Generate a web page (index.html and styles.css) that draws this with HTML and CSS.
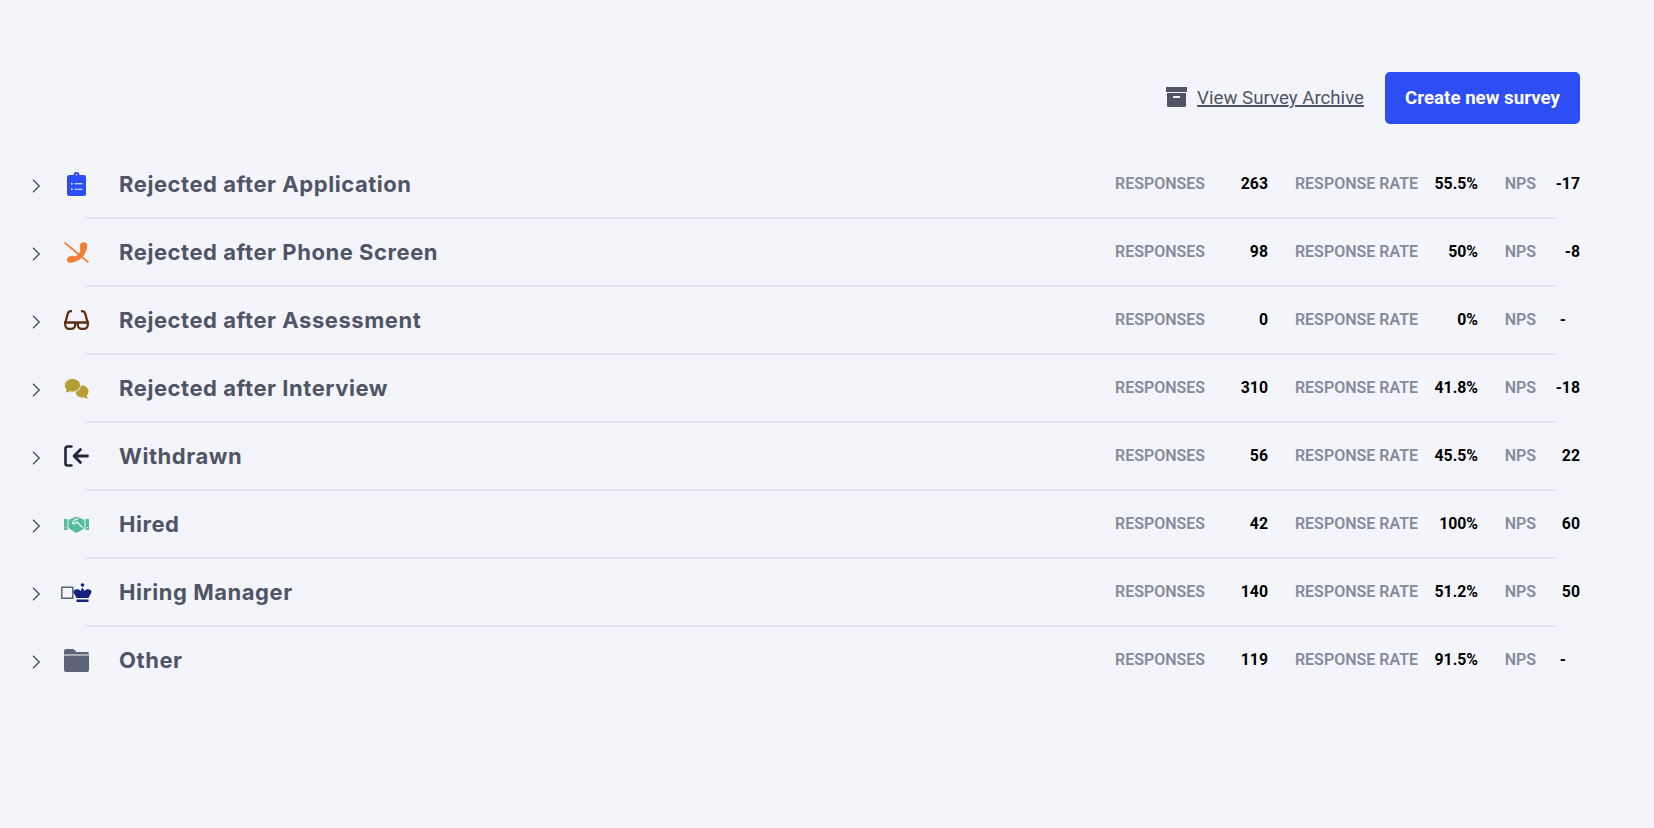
FILE: index.html
```html
<!DOCTYPE html>
<html lang="en">
<head>
    <meta charset="UTF-8">
    <title>Surveys</title>
    <link rel="stylesheet" href="styles.css">
</head>
<body>
    <header class="top-bar">
        <a class="archive-link" href="#">
            <svg class="archive-icon" viewBox="0 0 21 20"><path fill="#4f5566" d="M0 0h21v5H0z"/><path fill="#4f5566" fill-rule="evenodd" d="M1 6h19v12.500a1.500 1.500 0 0 1-1.500 1.500H2.500A1.500 1.500 0 0 1 1 18.500zM7 9v2h7V9z"/></svg>
            <span>View Survey Archive</span>
        </a>
        <button class="create-btn">Create new survey</button>
    </header>

    <main class="survey-list">
        <div class="survey-row">
            <svg class="chevron" viewBox="0 0 8 14"><path d="M1 .7l6.300 6.300L1 13.300"/></svg>
            <div class="icon-cell">
                <svg width="19" height="24" viewBox="0 0 19 24"><path fill="#2d4ef5" fill-rule="evenodd" d="M2 3h4.500a3 3 0 0 1 6 0H17a2 2 0 0 1 2 2v17a2 2 0 0 1-2 2H2a2 2 0 0 1-2-2V5a2 2 0 0 1 2-2zM9.500 2a.8.8 0 1 0 0 1.600.8.8 0 0 0 0-1.600zM4 11v1.600h1.600V11zM7.500 11.300v1h8v-1zM4 16.500v1.600h1.600v-1.600zM7.500 16.800v1h8v-1z"/></svg>
            </div>
            <h2 class="survey-name">Rejected after Application</h2>
            <div class="stats">
                <span class="stat-label">Responses</span><span class="stat-value">263</span>
                <span class="stat-label">Response rate</span><span class="stat-value">55.5%</span>
                <span class="stat-label">NPS</span><span class="stat-value">-17</span>
            </div>
        </div>
        <hr class="row-line">

        <div class="survey-row">
            <svg class="chevron" viewBox="0 0 8 14"><path d="M1 .7l6.300 6.300L1 13.300"/></svg>
            <div class="icon-cell">
                <svg width="25" height="21" viewBox="0 0 25 21"><path fill="#f08033" d="M17 1c2-1.200 5-1 6 1 1 5-2 12-8 16-3 2-8 3-10.500 2.500C3 20 2.500 18 3.500 16c1.500-2 5.500-3 8-1.500 2.500-1.500 4-3.500 5-6-1-2-1-5.500.5-7.500z"/><path stroke="#f08033" stroke-width="1.800" d="M.6.600L24.400 20.400"/></svg>
            </div>
            <h2 class="survey-name">Rejected after Phone Screen</h2>
            <div class="stats">
                <span class="stat-label">Responses</span><span class="stat-value">98</span>
                <span class="stat-label">Response rate</span><span class="stat-value">50%</span>
                <span class="stat-label">NPS</span><span class="stat-value">-8</span>
            </div>
        </div>
        <hr class="row-line">

        <div class="survey-row">
            <svg class="chevron" viewBox="0 0 8 14"><path d="M1 .7l6.300 6.300L1 13.300"/></svg>
            <div class="icon-cell">
                <svg width="25" height="20" viewBox="0 0 25 20"><g fill="none" stroke="#5c2d0e" stroke-width="2.300"><path d="M1.200 13L4 3C4.500 1.500 6 1 8 1.200M23.800 13L21 3C20.500 1.500 19 1 17 1.200"/><path d="M1.200 12.500h10v2.300a4 4 0 0 1-4 4h-2a4 4 0 0 1-4-4zM23.800 12.500h-10v2.300a4 4 0 0 0 4 4h2a4 4 0 0 0 4-4zM11 13.500c1-.6 2-.6 3 0"/></g></svg>
            </div>
            <h2 class="survey-name">Rejected after Assessment</h2>
            <div class="stats">
                <span class="stat-label">Responses</span><span class="stat-value">0</span>
                <span class="stat-label">Response rate</span><span class="stat-value">0%</span>
                <span class="stat-label">NPS</span><span class="stat-value stat-empty">-</span>
            </div>
        </div>
        <hr class="row-line">

        <div class="survey-row">
            <svg class="chevron" viewBox="0 0 8 14"><path d="M1 .7l6.300 6.300L1 13.300"/></svg>
            <div class="icon-cell">
                <svg width="25" height="21" viewBox="0 0 25 21"><path fill="#b49f33" d="M18 7.500c3.600 0 6.500 2.700 6.500 6 0 1.700-.7 3-1.700 4 .1 1.200.8 2.300 1.700 3-1.800 0-3.300-.5-4.500-1.300-.6.200-1.300.3-2 .3-3.600 0-6.500-2.700-6.500-6s2.900-6 6.500-6z"/><path fill="#b49f33" stroke="#f4f5fa" stroke-width="1" d="M8.500.5c4.400 0 8 3 8 6.800s-3.600 6.800-8 6.800c-.9 0-1.700-.1-2.500-.4C4.800 14.500 2.500 15 .5 14.800c1-1 1.500-2 1.700-3.300C1 10.300.5 8.800.5 7.300.5 3.500 4.100.5 8.500.5z"/></svg>
            </div>
            <h2 class="survey-name">Rejected after Interview</h2>
            <div class="stats">
                <span class="stat-label">Responses</span><span class="stat-value">310</span>
                <span class="stat-label">Response rate</span><span class="stat-value">41.8%</span>
                <span class="stat-label">NPS</span><span class="stat-value">-18</span>
            </div>
        </div>
        <hr class="row-line">

        <div class="survey-row">
            <svg class="chevron" viewBox="0 0 8 14"><path d="M1 .7l6.300 6.300L1 13.300"/></svg>
            <div class="icon-cell">
                <svg width="25" height="22" viewBox="0 0 25 22"><path fill="none" stroke="#23263b" stroke-width="2.600" stroke-linecap="round" stroke-linejoin="round" d="M7.500 1.500H3.500a2 2 0 0 0-2 2v15a2 2 0 0 0 2 2h4"/><path fill="none" stroke="#23263b" stroke-width="2.800" stroke-linecap="round" stroke-linejoin="round" d="M23.500 11H10.500M16.500 4.500L10 11l6.500 6.500"/></svg>
            </div>
            <h2 class="survey-name">Withdrawn</h2>
            <div class="stats">
                <span class="stat-label">Responses</span><span class="stat-value">56</span>
                <span class="stat-label">Response rate</span><span class="stat-value">45.5%</span>
                <span class="stat-label">NPS</span><span class="stat-value">22</span>
            </div>
        </div>
        <hr class="row-line">

        <div class="survey-row">
            <svg class="chevron" viewBox="0 0 8 14"><path d="M1 .7l6.300 6.300L1 13.300"/></svg>
            <div class="icon-cell">
                <svg width="25" height="17" viewBox="0 0 25 17"><path fill="#56bb9f" d="M0 3h3.500v11H0zM21.500 3H25v11h-3.500zM4.500 4L9 2q3.500-2 7 0l4.500 2v8L14 16.300q-1.500.8-3 0L4.500 12z"/><path fill="none" stroke="#f4f5fa" stroke-width="1.200" d="M14.500 2.500L10.500 4 8.500 7l1.500 1 3-2 5.500 5.500"/><path fill="#f4f5fa" d="M1.200 11h1v1.300h-1zM22.800 11h1v1.300h-1z"/></svg>
            </div>
            <h2 class="survey-name">Hired</h2>
            <div class="stats">
                <span class="stat-label">Responses</span><span class="stat-value">42</span>
                <span class="stat-label">Response rate</span><span class="stat-value">100%</span>
                <span class="stat-label">NPS</span><span class="stat-value">60</span>
            </div>
        </div>
        <hr class="row-line">

        <div class="survey-row">
            <svg class="chevron" viewBox="0 0 8 14"><path d="M1 .7l6.300 6.300L1 13.300"/></svg>
            <div class="icon-cell">
                <svg width="31" height="19" viewBox="0 0 31 19"><path fill="none" stroke="#5d6373" stroke-width="1.500" d="M.8 4.300h11v11H.8z"/><circle fill="#14237f" cx="21.500" cy="2" r="1.800"/><path fill="#14237f" d="M13 7.500C15 5.500 18 6 19.500 8l2-3.500 2 3.500c1.500-2 4.500-2.500 6.500-.5 1 1.500.5 2.500-1 4.500L27.500 15h-12L14 12c-1.500-2-2-3-1-4.500zM15.500 16.500h12V19h-12z"/></svg>
            </div>
            <h2 class="survey-name">Hiring Manager</h2>
            <div class="stats">
                <span class="stat-label">Responses</span><span class="stat-value">140</span>
                <span class="stat-label">Response rate</span><span class="stat-value">51.2%</span>
                <span class="stat-label">NPS</span><span class="stat-value">50</span>
            </div>
        </div>
        <hr class="row-line">

        <div class="survey-row">
            <svg class="chevron" viewBox="0 0 8 14"><path d="M1 .7l6.300 6.300L1 13.300"/></svg>
            <div class="icon-cell">
                <svg width="25" height="23" viewBox="0 0 25 23"><path fill="#5d6478" d="M0 2a2 2 0 0 1 2-2h7.500l3 3H23a2 2 0 0 1 2 2v.5H0z"/><path fill="#5d6478" d="M0 6.500h25V21a2 2 0 0 1-2 2H2a2 2 0 0 1-2-2z"/></svg>
            </div>
            <h2 class="survey-name">Other</h2>
            <div class="stats">
                <span class="stat-label">Responses</span><span class="stat-value">119</span>
                <span class="stat-label">Response rate</span><span class="stat-value">91.5%</span>
                <span class="stat-label">NPS</span><span class="stat-value stat-empty">-</span>
            </div>
        </div>
    </main>
</body>
</html>
```

FILE: styles.css
```css
body {
    margin: 0;
    min-height: 100vh;
    background-color: #f4f5fa;
    font-family: "Roboto", sans-serif;
    color: #4f5566;
}

.top-bar {
    display: flex;
    justify-content: flex-end;
    align-items: center;
    gap: 21px;
    height: 52px;
    padding: 72px 74px 0 0;
}

.archive-link {
    display: flex;
    align-items: center;
    gap: 10px;
    color: #4f5566;
    font-size: 18.7px;
}

.archive-link span {
    text-decoration: underline;
    text-underline-offset: 2px;
    text-decoration-thickness: 1px;
}

.archive-icon {
    flex: none;
    width: 21px;
    height: 20px;
    margin-bottom: 2px;
}

.create-btn {
    width: 195px;
    height: 52px;
    padding-bottom: 2px;
    border: none;
    border-radius: 5px;
    background-color: #2d4ef5;
    color: #ffffff;
    font-family: "Roboto", sans-serif;
    font-size: 18.7px;
    font-weight: 700;
}

.survey-list {
    padding-top: 27px;
}

.survey-row {
    display: flex;
    align-items: center;
    height: 66px;
    padding: 0 74px 0 32px;
}

.row-line {
    height: 2px;
    margin: 0 98px 0 85px;
    border: none;
    background-color: #e5e6ee;
}

.chevron {
    flex: none;
    width: 8px;
    height: 14px;
    margin-top: 3px;
    fill: none;
    stroke: #4f5566;
    stroke-width: 1.500;
}

.icon-cell {
    display: flex;
    flex: none;
    justify-content: center;
    align-items: center;
    width: 52px;
    margin-left: 10px;
}

.survey-name {
    flex: 1;
    margin: 0 0 0 17px;
    font-family: "Inter", sans-serif;
    font-size: 22px;
    font-weight: 700;
    letter-spacing: 0.55px;
    color: #4f5566;
}

.stats {
    display: grid;
    grid-template-columns: 90px 63px 150px 60px 58px 44px;
    align-items: center;
    margin-bottom: 2px;
    white-space: nowrap;
}

.stat-label {
    font-size: 16px;
    font-weight: 600;
    text-align: right;
    text-transform: uppercase;
    color: #858b9b;
}

.stat-value {
    font-size: 15.8px;
    font-weight: 700;
    color: #000000;
    text-align: right;
}

.stat-empty {
    padding-right: 14px;
}
```
